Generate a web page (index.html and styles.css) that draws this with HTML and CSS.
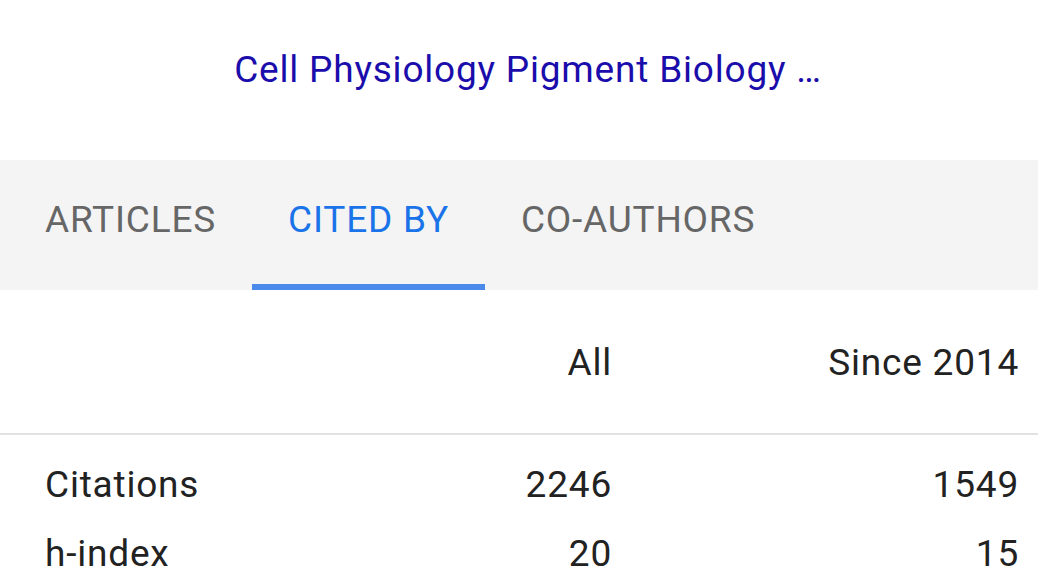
FILE: index.html
```html
<!DOCTYPE html>
<html lang="en">

<head>
    <meta charset="UTF-8">
    <meta name="viewport" content="width=device-width, initial-scale=1.0">
    <title>Cited by</title>
    <link rel="stylesheet" href="styles.css">
</head>

<body>
    <header class="profile-head">
        <a class="profile-interests" href="#">Cell Physiology Pigment Biology …</a>
    </header>

    <nav class="tab-bar">
        <div class="tab">ARTICLES</div>
        <div class="tab active">CITED BY</div>
        <div class="tab">CO-AUTHORS</div>
    </nav>

    <main class="cite-table">
        <div class="cite-row cite-head">
            <div class="cite-label"></div>
            <div class="cite-num">All</div>
            <div class="cite-num">Since 2014</div>
        </div>
        <div class="cite-row">
            <div class="cite-label">Citations</div>
            <div class="cite-num">2246</div>
            <div class="cite-num">1549</div>
        </div>
        <div class="cite-row">
            <div class="cite-label">h-index</div>
            <div class="cite-num">20</div>
            <div class="cite-num">15</div>
        </div>
    </main>
</body>

</html>
```

FILE: styles.css
```css
:root {
    --link: #1a0dab;
    --active: #1a73e8;
    --underline: #4b89ea;
    --tab-text: #666666;
    --text: #222222;
    --bar: #f4f4f4;
    --divider: #e2e2e2;
}

* {
    margin: 0;
    padding: 0;
    box-sizing: border-box;
}

body {
    font-family: 'Roboto', 'Liberation Sans', sans-serif;
    font-size: 37px;
    letter-spacing: 0.8px;
    line-height: 69px;
    color: var(--text);
    background-color: #fff;
    width: 1038px;
    overflow: hidden;
}

a {
    text-decoration: none;
}

.profile-head {
    height: 160px;
    padding: 35px 0 0 18px;
    text-align: center;
}

.profile-interests {
    color: var(--link);
}

.tab-bar {
    display: flex;
    height: 130px;
    padding-left: 9px;
    background-color: var(--bar);
}

.tab {
    padding: 25px 36px 30px;
    border-bottom: 6px solid transparent;
    color: var(--tab-text);
}

.tab.active {
    color: var(--active);
    border-bottom-color: var(--underline);
}

.cite-table {
    padding: 0 19px 0 45px;
}

.cite-row {
    display: grid;
    grid-template-columns: 1fr 200px 407px;
}

.cite-head {
    padding: 38px 19px 36px 45px;
    margin: 0 -19px 15px -45px;
    border-bottom: 2px solid var(--divider);
}

.cite-num {
    text-align: right;
}
```
